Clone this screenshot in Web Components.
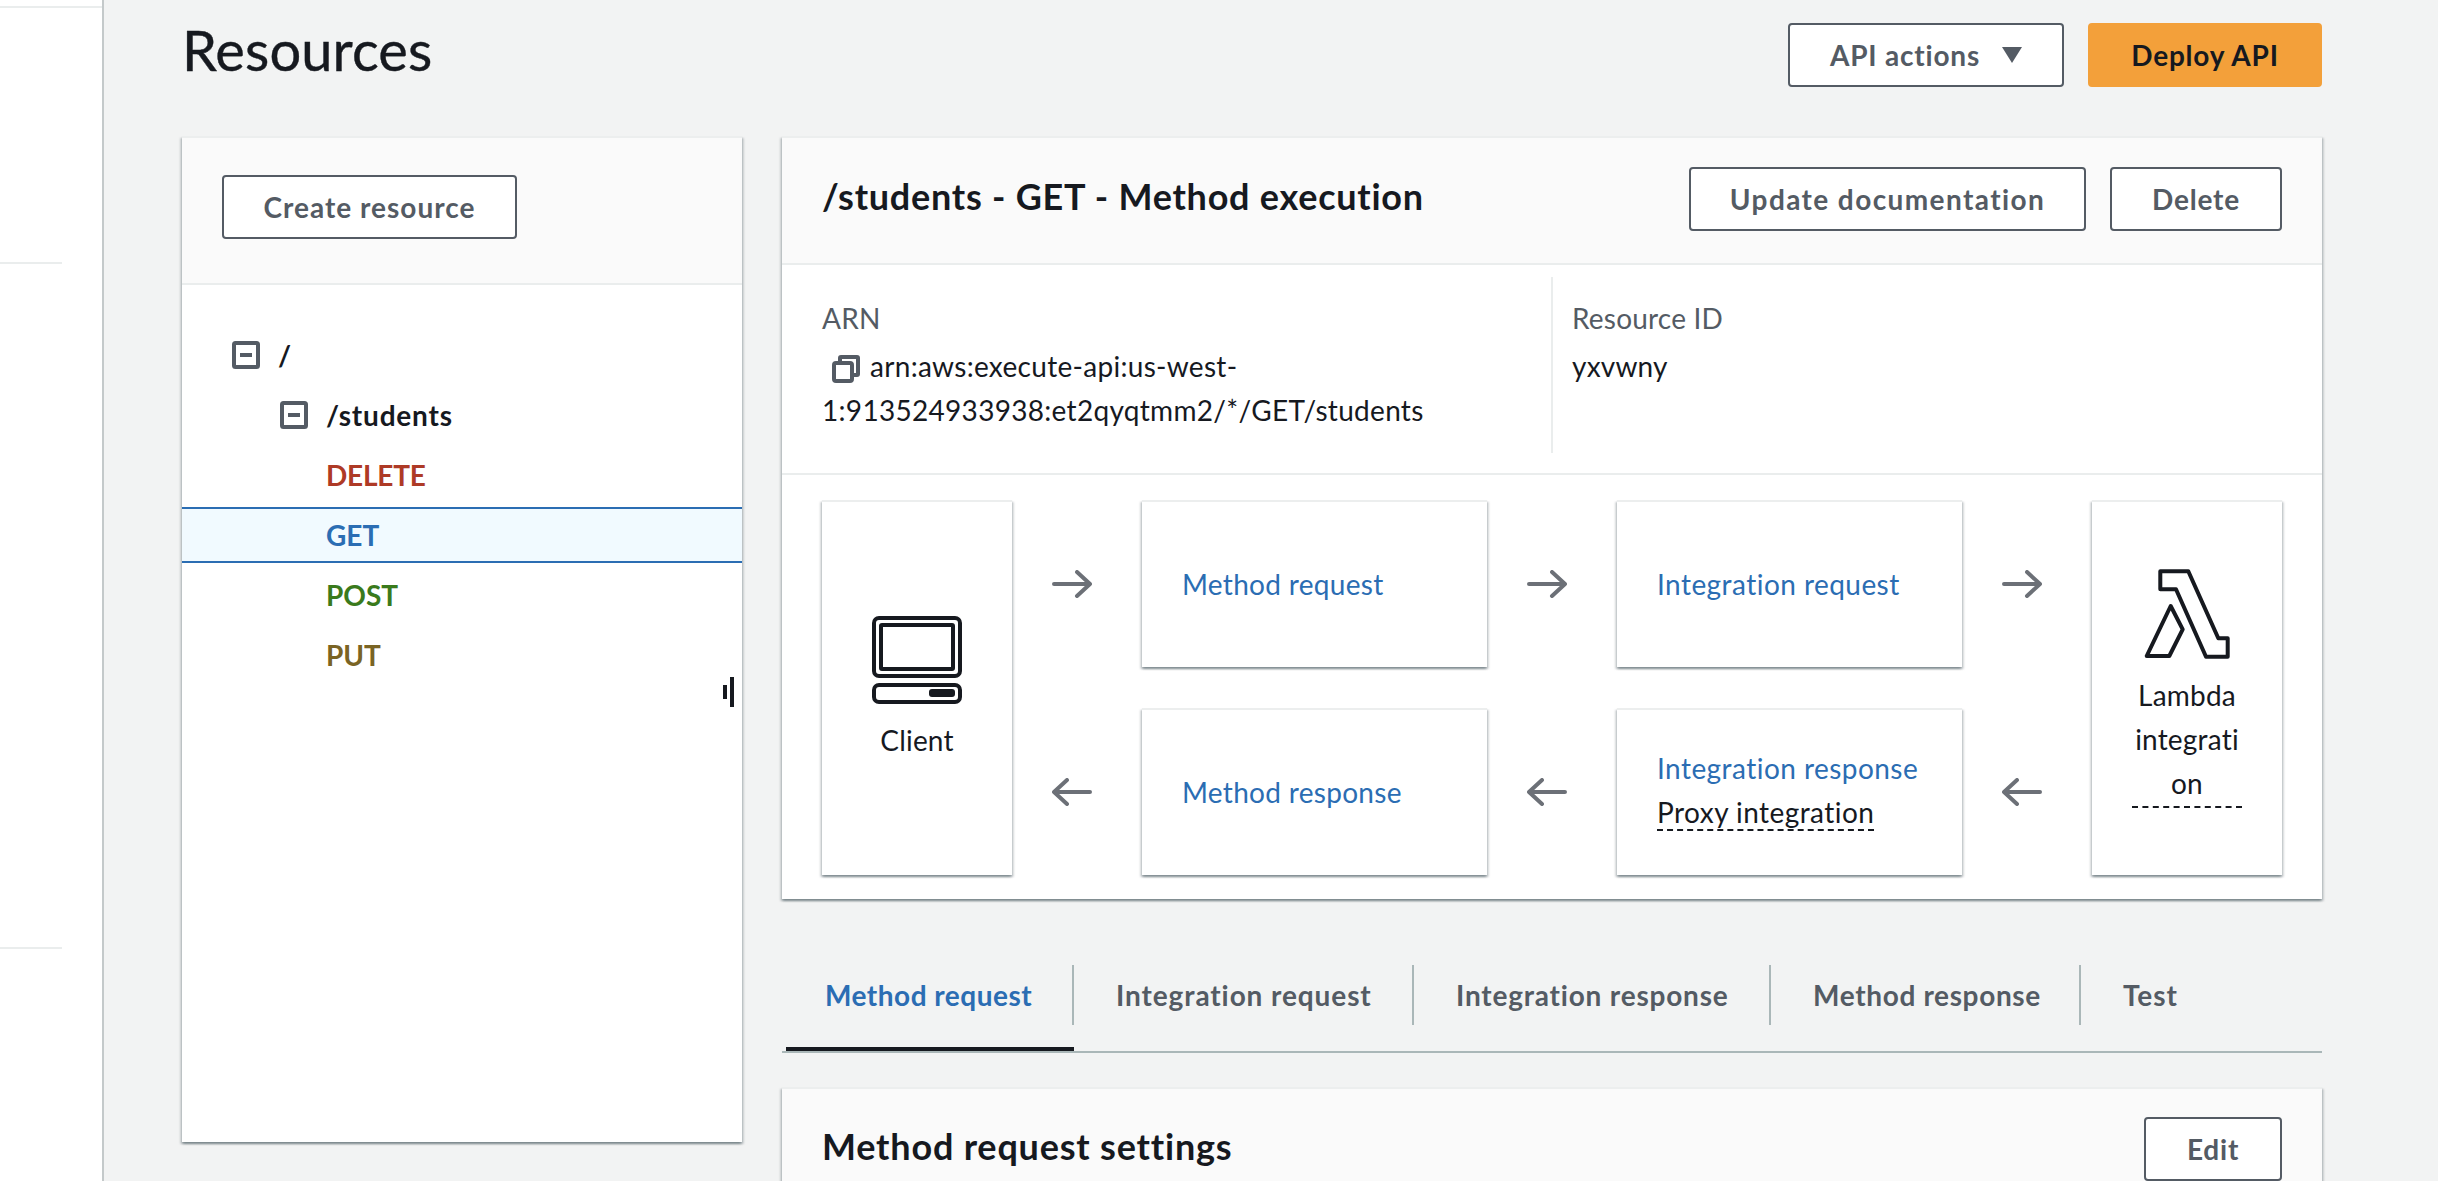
<!doctype html>
<html>
<head>
<meta charset="utf-8">
<title>Resources</title>
<style>
    html, body { margin: 0; height: 1181px; overflow: hidden; background: #f2f3f3; }
    body { font-family: Lato, "Liberation Sans", sans-serif; font-size: 28px; color: #16191f; letter-spacing: 0.2px; }
    svg { display: block; }
</style>
</head>
<body>

<resources-page>
    <side-nav slot="nav"></side-nav>

    <page-header slot="header">
        <span slot="title">Resources</span>
        <aws-button>API actions
            <svg slot="icon" width="20" height="16" viewBox="0 0 20 16"><path d="M0 0H20L10 16Z" fill="#545b64"/></svg>
        </aws-button>
        <aws-button primary style="width: 234px">Deploy API</aws-button>
    </page-header>

    <panel-card slot="tree" start style="--head-pad: 37px 40px 44px; height: 1006px">
        <aws-button slot="actions" style="width: 295px; letter-spacing: 1px">Create resource</aws-button>
        <resource-tree>
            <tree-row level="1" expander bold>/</tree-row>
            <tree-row level="2" expander bold>/students</tree-row>
            <tree-row level="3" bold style="color: #ae3a26; letter-spacing: -0.2px">DELETE</tree-row>
            <tree-row level="3" bold selected style="color: #2b6db3; letter-spacing: 0">GET</tree-row>
            <tree-row level="3" bold style="color: #3a7a1c; letter-spacing: 0">POST</tree-row>
            <tree-row level="3" bold style="color: #7a6424; letter-spacing: 0">PUT</tree-row>
        </resource-tree>
    </panel-card>

    <panel-card slot="detail" style="--head-pad: 29px 40px 32px 40px">
        <span slot="title" style="letter-spacing: 0.75px">/students - GET - Method execution</span>
        <aws-button slot="actions" style="width: 397px; letter-spacing: 1.4px">Update documentation</aws-button>
        <aws-button slot="actions" style="width: 172px">Delete</aws-button>
        <arn-info>
            <svg slot="copy" width="28" height="28" viewBox="0 0 28 28" fill="none" stroke="#545b64" stroke-width="4">
                <rect x="2" y="8" width="18" height="18" rx="2"/>
                <path d="M8 6V3a1 1 0 0 1 1-1H25a1 1 0 0 1 1 1V19a1 1 0 0 1-1 1H22"/>
            </svg>
            <span slot="arn">arn:aws:execute-api:us-west-1:913524933938:et2qyqtmm2/*/GET/students</span>
            <span slot="id">yxvwny</span>
        </arn-info>
        <flow-diagram>
            <flow-box slot="client" center>
                <svg slot="icon" width="90" height="88" viewBox="0 0 90 88" fill="none" stroke="#16191f" stroke-width="4">
                    <rect x="2" y="2" width="86" height="58" rx="5"/>
                    <rect x="9" y="9" width="72" height="44" rx="1"/>
                    <rect x="2" y="69" width="86" height="17" rx="5"/>
                    <rect x="57" y="73" width="26" height="8" rx="3" fill="#16191f" stroke="none"/>
                </svg>
                Client
            </flow-box>
            <flow-arrow slot="a1"></flow-arrow>
            <flow-box slot="mreq"><span style="color: #2b6db3; letter-spacing: 0.3px">Method request</span></flow-box>
            <flow-arrow slot="a2"></flow-arrow>
            <flow-box slot="ireq"><span style="color: #2b6db3">Integration request</span></flow-box>
            <flow-arrow slot="a3"></flow-arrow>
            <flow-box slot="lambda" center>
                <svg slot="icon" width="86" height="90" viewBox="0 0 86 90" fill="none" stroke="#16191f" stroke-width="4" stroke-linejoin="round">
                    <path d="M16.3 2.3H44.3L74.3 69.3H83.7V87.7H62L32 20.3H16.3Z"/>
                    <path d="M26.7 37L38.7 60.3L25.3 87H2.7Z"/>
                </svg>
                <dash-text block>Lambda integration</dash-text>
            </flow-box>
            <flow-arrow slot="a4" back></flow-arrow>
            <flow-box slot="mres"><span style="color: #2b6db3; letter-spacing: 0.3px">Method response</span></flow-box>
            <flow-arrow slot="a5" back></flow-arrow>
            <flow-box slot="ires">
                <span style="color: #2b6db3">Integration response</span>
                <dash-text>Proxy integration</dash-text>
            </flow-box>
            <flow-arrow slot="a6" back></flow-arrow>
        </flow-diagram>
    </panel-card>

    <tab-bar slot="tabs">
        <tab-item active first style="width: 288px; letter-spacing: 0.5px">Method request</tab-item>
        <tab-item style="width: 340px; letter-spacing: 0.9px">Integration request</tab-item>
        <tab-item style="width: 357px; letter-spacing: 0.8px">Integration response</tab-item>
        <tab-item style="width: 310px; letter-spacing: 0.65px">Method response</tab-item>
        <tab-item last style="letter-spacing: 0.9px">Test</tab-item>
    </tab-bar>

    <panel-card slot="settings" style="--head-pad: 28px 40px 32px 40px">
        <span slot="title" style="letter-spacing: 0.8px">Method request settings</span>
        <aws-button slot="actions" style="width: 138px">Edit</aws-button>
    </panel-card>
</resources-page>

<script>
/**
 * Makes the template of a component from its markup.
 */
const makeTemplate = (html) => {
    const tpl = document.createElement('template');
    tpl.innerHTML = html;
    return tpl;
};

/**
 * Base class: attaches the open shadow root and clones the template.
 */
class ShadowElement extends HTMLElement {
    constructor(tpl) {
        super();
        this.attachShadow({ mode: 'open' }).appendChild(tpl.content.cloneNode(true));
    }
}

const pageTpl = makeTemplate(`
    <style>
        :host { display: flex; width: 2438px; height: 1181px; overflow: hidden; }
        main { width: 2218px; padding: 23px 0 0 78px; box-sizing: border-box; flex: none; }
        .columns { display: grid; grid-template-columns: 560px 1540px; column-gap: 40px; margin-top: 49px; align-items: start; }
        .right { display: flex; flex-direction: column; }
    </style>
    <slot name="nav"></slot>
    <main>
        <slot name="header"></slot>
        <div class="columns">
            <slot name="tree"></slot>
            <div class="right">
                <slot name="detail"></slot>
                <slot name="tabs"></slot>
                <slot name="settings"></slot>
            </div>
        </div>
    </main>
`);
class ResourcesPage extends ShadowElement { constructor() { super(pageTpl); } }
customElements.define('resources-page', ResourcesPage);

const navTpl = makeTemplate(`
    <style>
        :host { display: block; width: 102px; height: 1181px; background: #fff; border-right: 2px solid #c4c9ca; flex: none; }
        div { height: 2px; background: #eaeded; }
        .one { margin-top: 6px; }
        .two { margin-top: 254px; width: 62px; }
        .three { margin-top: 683px; width: 62px; }
    </style>
    <div class="one"></div><div class="two"></div><div class="three"></div>
`);
class SideNav extends ShadowElement { constructor() { super(navTpl); } }
customElements.define('side-nav', SideNav);

const headerTpl = makeTemplate(`
    <style>
        :host { display: flex; align-items: center; gap: 24px; width: 2140px; height: 64px; }
        h1 { margin: 0 auto 0 0; padding-bottom: 10px; font-size: 56px; font-weight: 400; line-height: 64px; letter-spacing: 0.1px; -webkit-text-stroke: 0.4px #16191f; }
    </style>
    <h1><slot name="title"></slot></h1>
    <slot></slot>
`);
class PageHeader extends ShadowElement { constructor() { super(headerTpl); } }
customElements.define('page-header', PageHeader);

const buttonTpl = makeTemplate(`
    <style>
        :host { display: inline-flex; align-items: center; justify-content: center; box-sizing: border-box; height: 64px; padding: 0 40px; gap: 22px; background: #fff; border: 2px solid #545b64; border-radius: 4px; color: #545b64; font-weight: 700; letter-spacing: 0.8px; white-space: nowrap; flex: none; }
        :host([primary]) { background: #f3a03a; border-color: #f3a03a; color: #16191f; }
    </style>
    <slot></slot><slot name="icon"></slot>
`);
class AwsButton extends ShadowElement { constructor() { super(buttonTpl); } }
customElements.define('aws-button', AwsButton);

const cardTpl = makeTemplate(`
    <style>
        :host { display: block; box-sizing: border-box; background: #fff; border-top: 2px solid #eceeee; box-shadow: 0 2px 2px 0 rgba(0,28,36,.3), 2px 2px 2px 0 rgba(0,28,36,.15), -2px 2px 2px 0 rgba(0,28,36,.15); }
        header { display: flex; align-items: center; gap: 24px; padding: var(--head-pad); background: #fafafa; border-bottom: 2px solid #eaeded; }
        h2 { margin: 0 auto 0 0; padding-bottom: 6px; font-size: 36px; font-weight: 700; line-height: 44px; }
        :host([start]) h2 { display: none; }
    </style>
    <header>
        <h2><slot name="title"></slot></h2>
        <slot name="actions"></slot>
    </header>
    <slot></slot>
`);
class PanelCard extends ShadowElement { constructor() { super(cardTpl); } }
customElements.define('panel-card', PanelCard);

const treeTpl = makeTemplate(`
    <style>
        :host { display: block; position: relative; padding-top: 40px; height: 717px; box-sizing: border-box; }
        /* drag handle of the split panel, lies over the tree */
        .grip { position: absolute; left: 541px; top: 400px; width: 4px; height: 14px; background: #16191f; }
        .grip::after { content: ""; position: absolute; left: 7px; top: -8px; width: 4px; height: 30px; background: #16191f; }
    </style>
    <slot></slot>
    <div class="grip"></div>
`);
class ResourceTree extends ShadowElement { constructor() { super(treeTpl); } }
customElements.define('resource-tree', ResourceTree);

const rowTpl = makeTemplate(`
    <style>
        :host { display: flex; align-items: center; box-sizing: border-box; height: 60px; gap: 18px; letter-spacing: 0.8px; }
        :host([bold]) { font-weight: 700; }
        :host([level="1"]) { padding-left: 50px; }
        :host([level="2"]) { padding-left: 98px; }
        :host([level="3"]) { padding-left: 144px; }
        :host([selected]) { height: 56px; margin: 2px 0; background: #f1faff; border-top: 2px solid #2b6db3; border-bottom: 2px solid #2b6db3; }
        svg { display: none; }
        :host([expander]) svg { display: block; }
    </style>
    <svg width="28" height="28" viewBox="0 0 28 28"><rect x="2" y="2" width="24" height="24" rx="1.5" fill="#fff" stroke="#545b64" stroke-width="4"/><rect x="8" y="12" width="12" height="4" fill="#545b64"/></svg>
    <slot></slot>
`);
class TreeRow extends ShadowElement { constructor() { super(rowTpl); } }
customElements.define('tree-row', TreeRow);

const arnTpl = makeTemplate(`
    <style>
        :host { display: grid; grid-template-columns: 729px 1fr; padding: 12px 0 20px 40px; border-bottom: 2px solid #eaeded; line-height: 44px; }
        .col { height: 176px; box-sizing: border-box; padding-top: 19px; }
        .id { border-left: 2px solid #eaeded; padding-left: 19px; }
        .label { color: #545b64; margin-bottom: 4px; }
        .arn { width: 680px; letter-spacing: 0.3px; }
        .copy { display: inline-block; vertical-align: -6px; margin: 0 10px; line-height: 0; }
    </style>
    <div class="col">
        <div class="label">ARN</div>
        <div class="arn"><span class="copy"><slot name="copy"></slot></span><slot name="arn"></slot></div>
    </div>
    <div class="col id">
        <div class="label">Resource ID</div>
        <div><slot name="id"></slot></div>
    </div>
`);
class ArnInfo extends ShadowElement { constructor() { super(arnTpl); } }
customElements.define('arn-info', ArnInfo);

const flowTpl = makeTemplate(`
    <style>
        :host { display: grid; grid-template-columns: 190px 130px 345px 130px 345px 130px 190px; grid-template-rows: 167px 41px 167px; padding: 25px 40px 24px; }
        ::slotted([slot="client"]), ::slotted([slot="lambda"]) { grid-row: 1 / 4; }
        ::slotted([slot="client"]) { grid-column: 1; }
        ::slotted([slot="lambda"]) { grid-column: 7; }
        ::slotted([slot="a1"]) { grid-area: 1 / 2; }
        ::slotted([slot="mreq"]) { grid-area: 1 / 3; }
        ::slotted([slot="a2"]) { grid-area: 1 / 4; }
        ::slotted([slot="ireq"]) { grid-area: 1 / 5; }
        ::slotted([slot="a3"]) { grid-area: 1 / 6; }
        ::slotted([slot="a6"]) { grid-area: 3 / 2; }
        ::slotted([slot="mres"]) { grid-area: 3 / 3; }
        ::slotted([slot="a5"]) { grid-area: 3 / 4; }
        ::slotted([slot="ires"]) { grid-area: 3 / 5; }
        ::slotted([slot="a4"]) { grid-area: 3 / 6; }
    </style>
    <slot name="client"></slot><slot name="a1"></slot><slot name="mreq"></slot><slot name="a2"></slot>
    <slot name="ireq"></slot><slot name="a3"></slot><slot name="lambda"></slot>
    <slot name="a4"></slot><slot name="mres"></slot><slot name="a5"></slot><slot name="ires"></slot><slot name="a6"></slot>
`);
class FlowDiagram extends ShadowElement { constructor() { super(flowTpl); } }
customElements.define('flow-diagram', FlowDiagram);

const boxTpl = makeTemplate(`
    <style>
        :host { display: flex; flex-direction: column; justify-content: center; align-items: flex-start; box-sizing: border-box; padding: 0 40px 2px 40px; line-height: 44px; letter-spacing: 0.45px; background: #fff; border-top: 2px solid #eceeee; box-shadow: 0 2px 2px 0 rgba(0,28,36,.3), 2px 2px 2px 0 rgba(0,28,36,.15), -2px 2px 2px 0 rgba(0,28,36,.15); }
        :host([center]) { align-items: center; text-align: center; padding: 0 40px; letter-spacing: 0.2px; }
        .icon { margin-bottom: 14px; line-height: 0; }
        :host(:not([center])) .icon { display: none; }
    </style>
    <div class="icon"><slot name="icon"></slot></div>
    <slot></slot>
`);
class FlowBox extends ShadowElement { constructor() { super(boxTpl); } }
customElements.define('flow-box', FlowBox);

const dashTpl = makeTemplate(`
    <style>
        :host { display: block; margin: 6px 0 6px; line-height: 33px; border-bottom: 2px dashed #16191f; }
        :host([block]) { width: 110px; margin: 0; line-height: 44px; padding-bottom: 1px; overflow-wrap: anywhere; }
    </style>
    <slot></slot>
`);
class DashText extends ShadowElement { constructor() { super(dashTpl); } }
customElements.define('dash-text', DashText);

const arrowTpl = makeTemplate(`
    <style>
        :host { display: flex; align-items: center; justify-content: center; padding-right: 10px; }
        :host([back]) svg { transform: scaleX(-1); }
    </style>
    <svg width="40" height="28" viewBox="0 0 40 28" fill="none" stroke="#6c7077" stroke-width="4" stroke-linecap="round" stroke-linejoin="round"><path d="M2 14H38M25 2L38 14L25 26"/></svg>
`);
class FlowArrow extends ShadowElement { constructor() { super(arrowTpl); } }
customElements.define('flow-arrow', FlowArrow);

const tabsTpl = makeTemplate(`
    <style>
        :host { display: flex; margin: 66px 0 34px; padding-left: 4px; border-bottom: 2px solid #aab7b8; }
    </style>
    <slot></slot>
`);
class TabBar extends ShadowElement { constructor() { super(tabsTpl); } }
customElements.define('tab-bar', TabBar);

const tabTpl = makeTemplate(`
    <style>
        :host { display: block; height: 86px; box-sizing: border-box; padding-bottom: 26px; font-weight: 700; color: #545b64; flex: none; }
        div { box-sizing: border-box; height: 60px; line-height: 60px; padding-left: 42px; border-right: 2px solid #aab7b8; white-space: nowrap; }
        :host([first]) div { padding-left: 39px; }
        :host([last]) div { border-right: 0; }
        :host([active]) { color: #2b6db3; border-bottom: 4px solid #16191f; padding-bottom: 22px; }
    </style>
    <div><slot></slot></div>
`);
class TabItem extends ShadowElement { constructor() { super(tabTpl); } }
customElements.define('tab-item', TabItem);
</script>
</body>
</html>
